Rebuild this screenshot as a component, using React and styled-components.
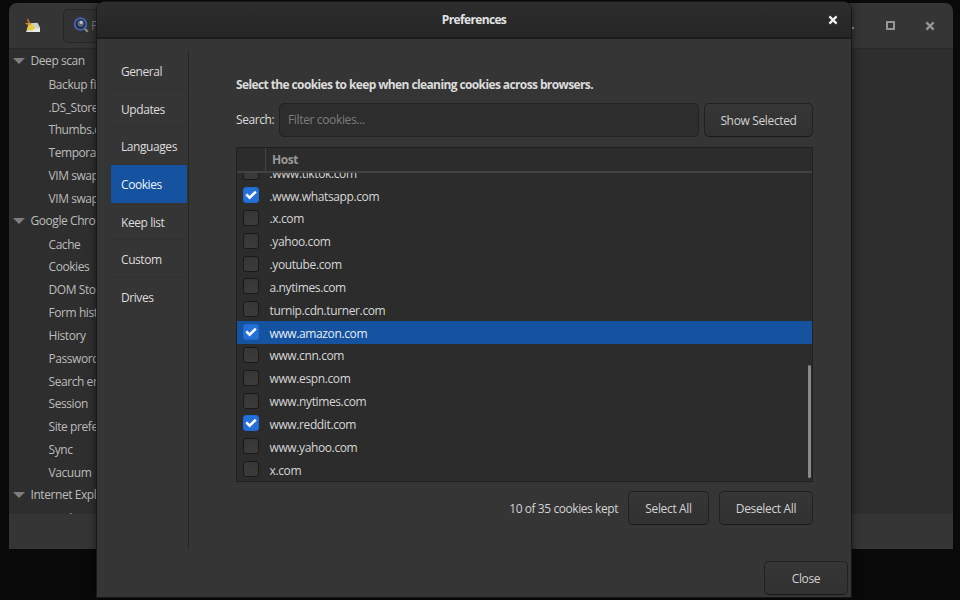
import styled, { createGlobalStyle, css } from 'styled-components';

const tree = [
  {
    name: 'Deep scan',
    options: ['Backup files', '.DS_Store', 'Thumbs.db', 'Temporary files', 'VIM swap files root', 'VIM swap files user']
  },
  {
    name: 'Google Chrome',
    options: [
      'Cache',
      'Cookies',
      'DOM Storage',
      'Form history',
      'History',
      'Passwords',
      'Search engines',
      'Session',
      'Site preferences',
      'Sync',
      'Vacuum'
    ]
  },
  { name: 'Internet Explorer', options: ['Cookies'] }
];

const tabs = ['General', 'Updates', 'Languages', 'Cookies', 'Keep list', 'Custom', 'Drives'];

const cookies = [
  { host: '.www.tiktok.com' },
  { host: '.www.whatsapp.com', keep: true },
  { host: '.x.com' },
  { host: '.yahoo.com' },
  { host: '.youtube.com' },
  { host: 'a.nytimes.com' },
  { host: 'turnip.cdn.turner.com' },
  { host: 'www.amazon.com', keep: true, selected: true },
  { host: 'www.cnn.com' },
  { host: 'www.espn.com' },
  { host: 'www.nytimes.com' },
  { host: 'www.reddit.com', keep: true },
  { host: 'www.yahoo.com' },
  { host: 'x.com' }
];

const CloseIcon = () => (
  <svg width="10" height="10" viewBox="0 0 10 10">
    <path d="M1.4 1.4L8.6 8.6M8.6 1.4L1.4 8.6" stroke="currentColor" strokeWidth="2.2" />
  </svg>
);

const BroomIcon = () => (
  <svg width="18" height="16" viewBox="0 0 18 16">
    <path d="M5.5 5.2L13.5 4.8L16 9.5V14H2z" fill="#cfcfcb" />
    <path d="M7.5 11L16 10.2V14H2z" fill="#e8e8e4" />
    <path d="M3.6 1L5.4 5.5" stroke="#b56d25" strokeWidth="1.8" />
    <path d="M1 5.2L5.6 4.4L7.8 6.6L6 8.6z" fill="#d08a35" />
    <path d="M4 7.4L8.2 5.8L11 10.4L7.4 12.8L3 11.6z" fill="#e8cb3e" />
  </svg>
);

const SearchIcon = () => (
  <svg width="17" height="17" viewBox="0 0 17 17">
    <path d="M11.5 11.5L14.8 14.8" stroke="#8b8b88" strokeWidth="2.2" />
    <circle cx="7.5" cy="7" r="5.8" fill="#1d2536" stroke="#4560ae" strokeWidth="2" />
    <circle cx="7.7" cy="6.6" r="3.4" fill="#59657d" />
    <circle cx="8.2" cy="5.4" r="1.6" fill="#b9c0cc" />
  </svg>
);

const App = () => (
  <>
    <GlobalStyle />
    <Desktop>
      <MainWindow>
        <MainHeader>
          <BroomIcon />
          <PreviewButton>
            <SearchIcon />
            Preview
          </PreviewButton>
          <WindowControls>
            <MinimizeMark />
            <MaximizeMark />
            <CloseIcon />
          </WindowControls>
        </MainHeader>
        <Tree>
          {tree.map((cleaner) => (
            <div key={cleaner.name}>
              <CleanerRow>
                <Expander />
                {cleaner.name}
              </CleanerRow>
              {cleaner.options.map((option) => (
                <OptionRow key={option}>{option}</OptionRow>
              ))}
            </div>
          ))}
        </Tree>
        <StatusArea />
      </MainWindow>

      <Dialog>
        <DialogHeader>
          <DialogTitle>Preferences</DialogTitle>
          <DialogClose aria-label="Close dialog">
            <CloseIcon />
          </DialogClose>
        </DialogHeader>
        <DialogBody>
          <Sidebar>
            {tabs.map((tab) => (
              <Tab key={tab} $active={tab === 'Cookies'}>
                {tab}
              </Tab>
            ))}
          </Sidebar>
          <Content>
            <Heading>Select the cookies to keep when cleaning cookies across browsers.</Heading>
            <SearchRow>
              <SearchLabel>Search:</SearchLabel>
              <Entry placeholder="Filter cookies..." />
              <Button $width={109}>Show Selected</Button>
            </SearchRow>
            <Table>
              <TableHeader>
                <CheckColumn />
                <HostColumn>Host</HostColumn>
              </TableHeader>
              <TableBody>
                {cookies.map(({ host, keep, selected }) => (
                  <CookieRow key={host} $selected={selected}>
                    <Checkbox $checked={keep}>
                      {keep && (
                        <svg width="14" height="14" viewBox="0 0 14 14">
                          <path d="M2.3 6.4L5.6 9.6L11.8 3.6" fill="none" stroke="#fff" strokeWidth="2.6" />
                        </svg>
                      )}
                    </Checkbox>
                    {host}
                  </CookieRow>
                ))}
                <ScrollThumb />
              </TableBody>
            </Table>
            <Actions>
              <KeptCount>10 of 35 cookies kept</KeptCount>
              <Button $width={81}>Select All</Button>
              <Button $width={94}>Deselect All</Button>
            </Actions>
          </Content>
        </DialogBody>
        <DialogFooter>
          <Button $width={84}>Close</Button>
        </DialogFooter>
      </Dialog>
    </Desktop>
  </>
);

const GlobalStyle = createGlobalStyle`
  * {
    box-sizing: border-box;
  }

  body {
    margin: 0;
    background: #090909;
  }
`;

const rowHeight = '22.83px';

const headerFlex = css`
  display: flex;
  align-items: center;
  flex-shrink: 0;
`;

const Desktop = styled.div`
  position: relative;
  width: 960px;
  height: 600px;
  overflow: hidden;
  background: #090909;
  color: #dcdcdc;
  font-family: 'Open Sans', 'Noto Sans', sans-serif;
  font-size: 12px;
  letter-spacing: -0.43px;
  line-height: 16px;
  white-space: nowrap;
`;

const MainWindow = styled.div`
  position: absolute;
  left: 9px;
  top: 3px;
  width: 944px;
  height: 546px;
  display: flex;
  flex-direction: column;
  overflow: hidden;
  border-radius: 8px 8px 0 0;
  background: #353535;
  color: #bcbcbc;
`;

const MainHeader = styled.div`
  ${headerFlex}
  height: 46px;
  padding: 0 18px 0 15px;
  border-bottom: 1px solid #292929;
`;

const PreviewButton = styled.div`
  display: flex;
  align-items: center;
  gap: 1px;
  width: 120px;
  height: 34px;
  margin-left: 21px;
  padding-left: 9px;
  border: 1px solid #262626;
  border-radius: 5px;
  background: #323232;
  color: #777777;
`;

const WindowControls = styled.div`
  display: flex;
  align-items: center;
  margin-left: auto;
  color: #969696;
`;

const MinimizeMark = styled.span`
  width: 8px;
  height: 2px;
  margin: 5px 32px 0 0;
  background: currentColor;
`;

const MaximizeMark = styled.span`
  width: 9px;
  height: 9px;
  margin-right: 30px;
  border: 2px solid currentColor;
`;

const Tree = styled.div`
  height: 465px;
  padding-top: 1px;
  overflow: hidden;
  background: #2e2e2e;
`;

const CleanerRow = styled.div`
  display: flex;
  align-items: center;
  height: ${rowHeight};
  padding-left: 4px;
`;

const Expander = styled.span`
  margin-right: 5.5px;
  border: 6px solid transparent;
  border-top-color: #7e7e7e;
  border-bottom: 0;
`;

const OptionRow = styled.div`
  height: ${rowHeight};
  padding-left: 39.5px;
  line-height: 23.2px;
`;

const StatusArea = styled.div`
  flex: 1;
  background: #353535;
`;

const Dialog = styled.div`
  position: absolute;
  left: 97px;
  top: 2px;
  width: 754px;
  height: 595px;
  display: flex;
  flex-direction: column;
  border-radius: 8px 8px 0 0;
  background: #353535;
  box-shadow: 0 0 0 1px #181818, 0 2px 9px 1px rgba(0, 0, 0, 0.5);
`;

const DialogHeader = styled.div`
  ${headerFlex}
  height: 37px;
  padding-right: 13px;
  border-bottom: 2px solid #1b1b1b;
  border-radius: 8px 8px 0 0;
  background: linear-gradient(#2d2d2d, #262626);
`;

const DialogTitle = styled.div`
  flex: 1;
  padding-left: 23px;
  color: #e2e2e2;
  font-weight: 700;
  letter-spacing: -0.65px;
  text-align: center;
`;

const DialogClose = styled.button`
  display: flex;
  padding: 0;
  border: 0;
  background: none;
  color: #f2f2f2;
`;

const DialogBody = styled.div`
  display: flex;
  height: 509px;
  padding: 13px 38px 0 14px;
`;

const Sidebar = styled.nav`
  width: 78px;
  height: 496px;
  border-right: 1px solid #252525;
`;

const Tab = styled.div`
  height: 37.65px;
  padding-left: 10px;
  border-bottom: 1px solid #313131;
  line-height: 39px;

  &:last-child {
    border-bottom: 0;
  }

  ${({ $active }) =>
    $active &&
    css`
      width: 76px;
      border-color: #1552a0;
      background: #1552a0;
      color: #f0f4fa;
    `}
`;

const Content = styled.main`
  width: 577px;
  margin-left: 47px;
  padding-top: 25px;
`;

const Heading = styled.div`
  font-weight: 700;
  letter-spacing: -0.61px;
`;

const SearchRow = styled.div`
  display: flex;
  align-items: center;
  margin-top: 10px;
`;

const SearchLabel = styled.label`
  width: 43px;
`;

const Entry = styled.input`
  flex: 1;
  height: 34px;
  margin-right: 5px;
  padding: 0 8px 1px;
  border: 1px solid #222222;
  border-radius: 5px;
  background: #2d2d2d;
  color: #dcdcdc;
  font: inherit;
  letter-spacing: -0.35px;

  &::placeholder {
    color: #7d7d7d;
  }
`;

const Button = styled.button`
  width: ${({ $width }) => $width}px;
  height: 34px;
  padding: 1px 0 0;
  border: 1px solid #212121;
  border-bottom-color: #181818;
  border-radius: 5px;
  background: linear-gradient(#363636, #313131);
  color: #d2d2d2;
  font: inherit;
  letter-spacing: -0.35px;
`;

const Table = styled.div`
  height: 335px;
  margin-top: 10px;
  border: 1px solid #202020;
  background: #2c2c2c;
`;

const TableHeader = styled.div`
  display: flex;
  height: 25px;
  border-bottom: 2px solid #424242;
`;

const CheckColumn = styled.div`
  width: 29px;
  border-right: 1px solid #444444;
`;

const HostColumn = styled.div`
  padding-left: 6px;
  color: #989898;
  font-weight: 700;
  line-height: 23px;
`;

const TableBody = styled.div`
  position: relative;
  display: flex;
  flex-direction: column;
  justify-content: flex-end;
  height: 308px;
  overflow: hidden;
`;

const CookieRow = styled.div`
  display: flex;
  flex-shrink: 0;
  align-items: center;
  height: ${rowHeight};
  padding: 2px 0 0 6px;
  background: ${({ $selected }) => ($selected ? '#1552a0' : 'transparent')};
  color: ${({ $selected }) => ($selected ? '#e6edf6' : '#d6d6d6')};
  letter-spacing: -0.38px;
`;

const Checkbox = styled.span`
  display: flex;
  align-items: center;
  justify-content: center;
  width: 16px;
  height: 16px;
  margin: 0 10.5px 3px 0;
  border: 1px solid ${({ $checked }) => ($checked ? '#2069cc' : '#191919')};
  border-radius: 3px;
  background: ${({ $checked }) => ($checked ? '#2470d8' : 'linear-gradient(#363636, #3b3b3b)')};
`;

const ScrollThumb = styled.div`
  position: absolute;
  right: 1px;
  bottom: 3px;
  width: 3px;
  height: 113px;
  border-radius: 2px;
  background: #8a8a8a;
`;

const Actions = styled.div`
  display: flex;
  align-items: center;
  justify-content: flex-end;
  gap: 10px;
  margin-top: 9px;
`;

const KeptCount = styled.span`
  padding-top: 1px;
  color: #d2d2d2;
`;

const DialogFooter = styled.div`
  display: flex;
  justify-content: flex-end;
  margin-top: 13px;
  padding-right: 3px;
`;

export default App;
